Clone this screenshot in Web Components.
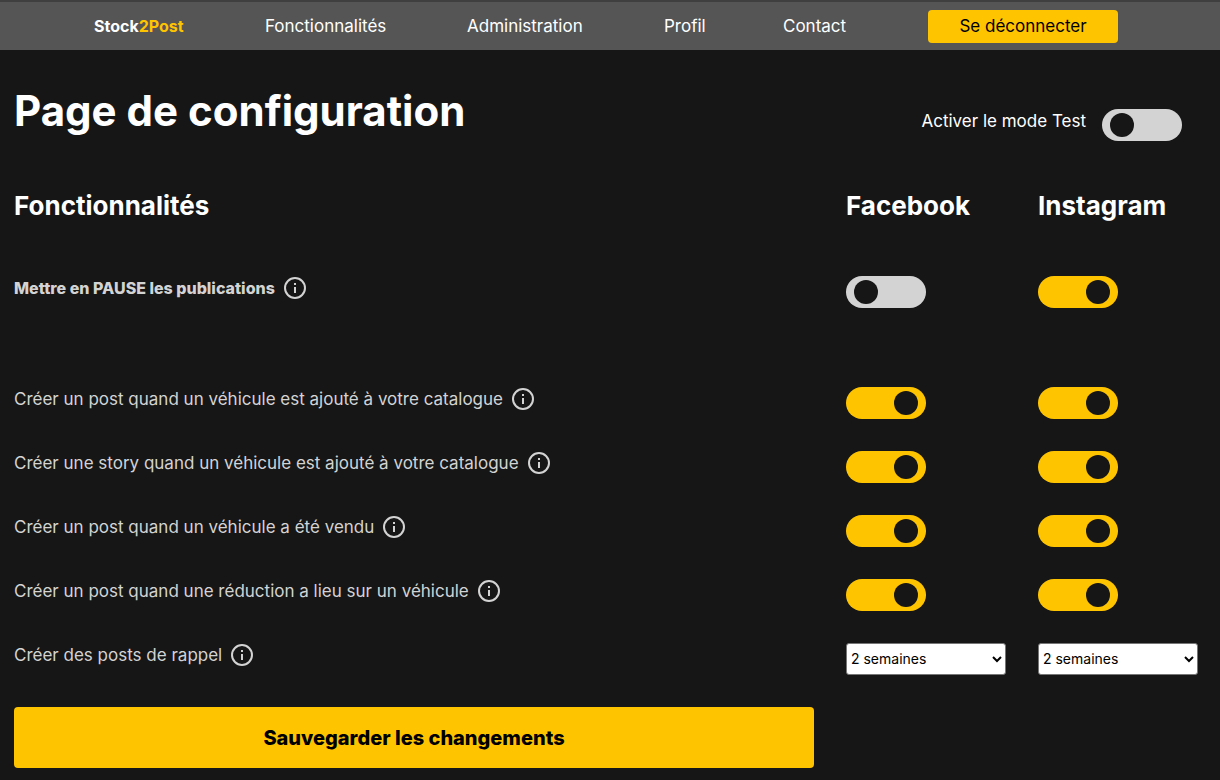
<!DOCTYPE html>
<html lang="fr">
<head>
<meta charset="utf-8">
<meta name="viewport" content="width=device-width, initial-scale=1">
<title>Stock2Post</title>
<style>
  :root {
    --accent: #ffc400;
    --bg: #161616;
    --muted: #d3d3d3;
    --columns: minmax(0, 1fr) 160px 160px;
  }
  body {
    margin: 0;
    background: var(--bg);
    color: #fff;
    font: 17px/24px Inter, "Noto Sans", sans-serif;
  }
</style>
</head>
<body>
<config-page></config-page>

<script>
const toggleStyles = `
  input[type="checkbox"] {
    appearance: none;
    box-sizing: border-box;
    display: flex;
    flex: none;
    width: 80px;
    height: 32px;
    margin: 0;
    padding: 4px 8px;
    border-radius: 16px;
    background: var(--muted);
    cursor: pointer;
  }
  input[type="checkbox"]::before {
    content: "";
    width: 24px;
    height: 24px;
    border-radius: 50%;
    background: var(--bg);
  }
  input[type="checkbox"]:checked {
    justify-content: flex-end;
    background: var(--accent);
  }
`;

class BaseElement extends HTMLElement {
  connectedCallback() {
    if (this.shadowRoot) return;
    this.attachShadow({ mode: "open" }).innerHTML = this.render();
  }
}

customElements.define("site-nav", class extends BaseElement {
  render() {
    return `
      <style>
        :host { display: block; background: #555; border-top: 2px solid #3f3f3f; }
        nav {
          display: grid;
          grid-template-columns: 91px 122px 117px 39px 65px 190px;
          gap: 80px;
          justify-content: center;
          align-items: center;
          padding: 8px 8px 7px 0;
          white-space: nowrap;
        }
        a { padding-bottom: 2px; color: #fff; text-decoration: none; }
        .brand { font-size: 16px; font-weight: 700; }
        .brand span { color: var(--accent); }
        button {
          height: 33px;
          padding: 0 0 2px;
          border: 0;
          border-radius: 4px;
          background: var(--accent);
          color: #000;
          font: inherit;
          cursor: pointer;
        }
      </style>
      <nav>
        <a class="brand" href="#">Stock<span>2Post</span></a>
        <a href="#">Fonctionnalités</a>
        <a href="#">Administration</a>
        <a href="#">Profil</a>
        <a href="#">Contact</a>
        <button type="button">Se déconnecter</button>
      </nav>`;
  }
});

customElements.define("labelled-toggle", class extends BaseElement {
  render() {
    return `
      <style>
        ${toggleStyles}
        :host { display: flex; gap: 16px; }
      </style>
      <label for="toggle"><slot></slot></label>
      <input type="checkbox" id="toggle">`;
  }
});

customElements.define("info-icon", class extends BaseElement {
  render() {
    return `
      <style>
        :host { display: block; flex: none; width: 24px; height: 24px; }
        svg { display: block; }
      </style>
      <svg width="24" height="24" viewBox="0 0 24 24" fill="none" stroke="currentColor" stroke-width="2" aria-hidden="true">
        <circle cx="12" cy="12" r="10"/>
        <path d="M12 11v6M12 7v2"/>
      </svg>`;
  }
});

customElements.define("setting-row", class extends BaseElement {
  control(id, name) {
    const value = this.getAttribute(id);
    if (this.getAttribute("type") === "select") {
      return `<select id="${id}" aria-label="${name}">
        <option>1 semaine</option>
        <option selected>${value}</option>
        <option>3 semaines</option>
      </select>`;
    }
    return `<input type="checkbox" id="${id}" aria-label="${name}" ${value === "on" ? "checked" : ""}>`;
  }
  render() {
    return `
      <style>
        ${toggleStyles}
        :host {
          display: grid;
          grid-template-columns: var(--columns);
          column-gap: 32px;
          align-items: start;
          color: var(--muted);
        }
        :host([strong]) { font-weight: 800; font-size: 16px; }
        .text { display: flex; gap: 8px; }
        select {
          width: 160px;
          height: 32px;
          box-sizing: border-box;
          padding: 0 0 2px;
          border: 1px solid #767676;
          border-radius: 3px;
          background: #fff;
          color: #000;
          font: 14px Inter, "Noto Sans", sans-serif;
        }
      </style>
      <div class="text"><label for="facebook"><slot></slot></label><info-icon></info-icon></div>
      ${this.control("facebook", "Facebook")}
      ${this.control("instagram", "Instagram")}`;
  }
});

customElements.define("config-page", class extends BaseElement {
  render() {
    return `
      <style>
        :host { display: block; }
        main { padding: 31px 22px 12px 14px; }
        header {
          display: flex;
          justify-content: space-between;
          align-items: flex-end;
          padding-right: 16px;
        }
        h1, h2 { margin: 0; font-weight: 700; }
        h1 { font-size: 42px; line-height: 60px; }
        h2 { font-size: 26px; line-height: 36px; }
        .heads {
          display: grid;
          grid-template-columns: var(--columns);
          column-gap: 32px;
          margin: 47px 0 52px;
        }
        .settings { display: grid; gap: 32px; }
        setting-row[strong] { margin-bottom: 47px; }
        .save {
          display: grid;
          grid-template-columns: var(--columns);
          column-gap: 32px;
          margin-top: 32px;
        }
        .save button {
          height: 61px;
          border: 0;
          border-radius: 4px;
          background: var(--accent);
          color: #000;
          font: 800 20px/28px Inter, "Noto Sans", sans-serif;
          cursor: pointer;
        }
      </style>
      <site-nav></site-nav>
      <main>
        <header>
          <h1>Page de configuration</h1>
          <labelled-toggle>Activer le mode Test</labelled-toggle>
        </header>
        <div class="heads"><h2>Fonctionnalités</h2><h2>Facebook</h2><h2>Instagram</h2></div>
        <div class="settings">
          <setting-row strong facebook="off" instagram="on">Mettre en PAUSE les publications</setting-row>
          <setting-row facebook="on" instagram="on">Créer un post quand un véhicule est ajouté à votre catalogue</setting-row>
          <setting-row facebook="on" instagram="on">Créer une story quand un véhicule est ajouté à votre catalogue</setting-row>
          <setting-row facebook="on" instagram="on">Créer un post quand un véhicule a été vendu</setting-row>
          <setting-row facebook="on" instagram="on">Créer un post quand une réduction a lieu sur un véhicule</setting-row>
          <setting-row type="select" facebook="2 semaines" instagram="2 semaines">Créer des posts de rappel</setting-row>
        </div>
        <div class="save"><button type="button">Sauvegarder les changements</button></div>
      </main>`;
  }
});
</script>
</body>
</html>
